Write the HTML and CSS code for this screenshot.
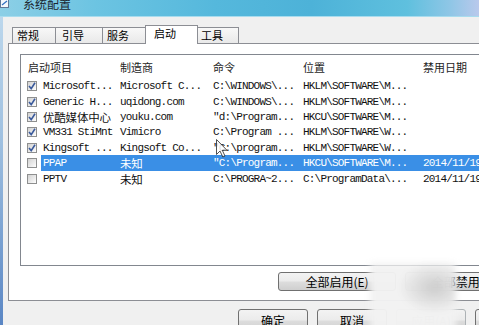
FILE: index.html
```html
<!DOCTYPE html>
<html lang="zh-CN">
<head>
<meta charset="utf-8">
<title>系统配置</title>
<link rel="stylesheet" href="styles.css">
</head>
<body>
<div class="window">
  <div class="titlebar">
    <svg class="appicon" width="9" height="8" viewBox="0 0 9 8"><rect x="0.5" y="-1.5" width="8" height="9" fill="#f4f8fc" stroke="#5f7896"/><path d="M2 5 L7 1" stroke="#2f6fc0" stroke-width="1.2"/></svg>
    <span class="title">系统配置</span>
  </div>
  <div class="main">
    <div class="frame"></div>
    <div class="dialog">
      <div class="tabs">
        <div class="tab t1">常规</div>
        <div class="tab t2">引导</div>
        <div class="tab t3">服务</div>
        <div class="tab sel">启动</div>
        <div class="tab t5">工具</div>
      </div>
      <div class="panel">
        <div class="list">
          <div class="hdr">
            <div class="h0">启动项目</div>
            <div class="h2">制造商</div>
            <div class="h3">命令</div>
            <div class="h4">位置</div>
            <div class="h5">禁用日期</div>
          </div>
          <div class="row">
            <div class="c0"><span class="cb"><svg viewBox="0 0 10 10" width="10" height="10"><path d="M2 5 L4.2 7.6 L8 1.8" fill="none" stroke="#3a5a9c" stroke-width="1.6"/></svg></span></div>
            <div class="data"><div class="c1">Microsoft...</div><div class="c2">Microsoft C...</div><div class="c3">C:\WINDOWS\...</div><div class="c4">HKLM\SOFTWARE\M...</div><div class="c5"></div></div>
          </div>
          <div class="row">
            <div class="c0"><span class="cb"><svg viewBox="0 0 10 10" width="10" height="10"><path d="M2 5 L4.2 7.6 L8 1.8" fill="none" stroke="#3a5a9c" stroke-width="1.6"/></svg></span></div>
            <div class="data"><div class="c1">Generic H...</div><div class="c2">uqidong.com</div><div class="c3">C:\WINDOWS\...</div><div class="c4">HKLM\SOFTWARE\M...</div><div class="c5"></div></div>
          </div>
          <div class="row">
            <div class="c0"><span class="cb"><svg viewBox="0 0 10 10" width="10" height="10"><path d="M2 5 L4.2 7.6 L8 1.8" fill="none" stroke="#3a5a9c" stroke-width="1.6"/></svg></span></div>
            <div class="data"><div class="c1 zh">优酷媒体中心</div><div class="c2">youku.com</div><div class="c3">"d:\Program...</div><div class="c4">HKCU\SOFTWARE\M...</div><div class="c5"></div></div>
          </div>
          <div class="row">
            <div class="c0"><span class="cb"><svg viewBox="0 0 10 10" width="10" height="10"><path d="M2 5 L4.2 7.6 L8 1.8" fill="none" stroke="#3a5a9c" stroke-width="1.6"/></svg></span></div>
            <div class="data"><div class="c1">VM331 StiMnt</div><div class="c2">Vimicro</div><div class="c3">C:\Program ...</div><div class="c4">HKLM\SOFTWARE\W...</div><div class="c5"></div></div>
          </div>
          <div class="row">
            <div class="c0"><span class="cb"><svg viewBox="0 0 10 10" width="10" height="10"><path d="M2 5 L4.2 7.6 L8 1.8" fill="none" stroke="#3a5a9c" stroke-width="1.6"/></svg></span></div>
            <div class="data"><div class="c1">Kingsoft ...</div><div class="c2">Kingsoft Co...</div><div class="c3">"C:\program...</div><div class="c4">HKLM\SOFTWARE\W...</div><div class="c5"></div></div>
          </div>
          <div class="row selected">
            <div class="c0"><span class="cb"></span></div>
            <div class="data"><div class="c1">PPAP</div><div class="c2 zh">未知</div><div class="c3">"C:\Program...</div><div class="c4">HKCU\SOFTWARE\M...</div><div class="c5">2014/11/19</div></div>
          </div>
          <div class="row">
            <div class="c0"><span class="cb"></span></div>
            <div class="data"><div class="c1">PPTV</div><div class="c2 zh">未知</div><div class="c3">C:\PROGRA~2...</div><div class="c4">C:\ProgramData\...</div><div class="c5">2014/11/19</div></div>
          </div>
        </div>
        <div class="panel-btns">
          <div class="btn wide">全部启用(E)</div>
          <div class="btn wide">全部禁用(D)</div>
        </div>
      </div>
      <div class="dlg-btns">
        <div class="btn std">确定</div>
        <div class="btn std">取消</div>
        <div class="btn std disabled">应用(A)</div>
        <div class="btn std">帮助</div>
      </div>
    </div>
  </div>
</div>
<svg class="cursor" width="13" height="19" viewBox="0 0 13 19"><path d="M0.5 0.5 L0.5 15.5 L4 12 L6.8 18 L9 17 L6.3 11.3 L11 11.3 Z" fill="#fff" stroke="#333" stroke-width="1" stroke-linejoin="round"/></svg>
<div class="blur"></div>
</body>
</html>
```

FILE: styles.css
```css
html, body {
  margin: 0;
  padding: 0;
}
body {
  width: 479px;
  height: 325px;
  overflow: hidden;
  position: relative;
  background: #f0f0f0;
  font-family: "Noto Sans CJK SC", sans-serif;
  color: #000;
}
.window {
  display: flex;
  flex-direction: column;
  height: 325px;
}
.titlebar {
  height: 16px;
  border-bottom: 1px solid #a8dcee;
  background: linear-gradient(90deg, #8ccfe6 0%, #6cc4e2 20%, #55b8dc 45%, #4db2d8 65%, #5fc0de 85%, #8fc6e6 94%, #b9c9ec 100%);
  display: flex;
  align-items: flex-start;
  flex-shrink: 0;
}
.appicon {
  display: block;
  flex-shrink: 0;
}
.title {
  font-size: 12px;
  line-height: 12px;
  margin-top: -2px;
  margin-left: 14px;
  color: #1c2630;
}
.main {
  display: flex;
  flex: 1;
  min-height: 0;
}
.frame {
  width: 3px;
  flex-shrink: 0;
  background: linear-gradient(#bcd7ec 0%, #9fc0e0 40%, #5a86c4 100%);
}
.dialog {
  flex: 1;
  min-width: 0;
  padding: 8px 0 0 5px;
  overflow: hidden;
  background: #f0f0f0;
}
.tabs {
  display: flex;
  align-items: flex-end;
  height: 18px;
  padding-left: 4px;
}
.tab {
  height: 16px;
  box-sizing: border-box;
  border: 1px solid #8c8e94;
  border-bottom: none;
  background: linear-gradient(#f8f8f8, #e9e9e9);
  font-size: 11px;
  line-height: 14px;
  padding-left: 4px;
  white-space: nowrap;
  flex-shrink: 0;
}
.t1 { width: 44px; }
.t2 { width: 48px; margin-left: -1px; padding-left: 6px; }
.t3 { width: 46px; margin-left: -1px; }
.t5 { width: 44px; margin-left: -3px; padding-left: 5px; }
.tab.sel {
  width: 53px;
  height: 19px;
  margin-left: -3px;
  margin-bottom: -1px;
  background: #fff;
  position: relative;
  z-index: 1;
  padding-left: 8px;
  line-height: 15px;
}
.panel {
  width: 600px;
  height: 258px;
  box-sizing: border-box;
  border: 1px solid #8c8e94;
  background: #fff;
  padding: 10px 0 0 11px;
}
.list {
  width: 600px;
  height: 212px;
  box-sizing: border-box;
  border: 1px solid #82878f;
  background: #fff;
}
.hdr {
  height: 23.5px;
  display: flex;
  align-items: center;
  font-size: 11px;
  color: #1e1e1e;
}
.hdr > div { box-sizing: border-box; white-space: nowrap; }
.h0 { width: 97px; padding-left: 7px; }
.h2 { width: 93px; padding-left: 2px; }
.h3 { width: 90px; padding-left: 2px; }
.h4 { width: 120px; padding-left: 2px; }
.h5 { padding-left: 2px; }
.row {
  height: 15.4px;
  display: flex;
  align-items: stretch;
  font-family: "Liberation Mono", "Noto Sans CJK SC", monospace;
  font-size: 11px;
  letter-spacing: -0.8px;
  color: #111;
}
.c0 {
  width: 20px;
  box-sizing: border-box;
  padding-left: 6px;
  display: flex;
  align-items: center;
  flex-shrink: 0;
}
.cb {
  width: 10px;
  height: 10px;
  box-sizing: border-box;
  border: 1px solid #8e8f8f;
  background: linear-gradient(135deg, #d2d2d2, #f0f0f0 70%, #fff);
  display: block;
  position: relative;
}
.cb svg {
  display: block;
  margin: -1px 0 0 -1px;
}
.data {
  display: flex;
  align-items: center;
  flex: 1;
}
.data > div {
  box-sizing: border-box;
  padding-left: 2px;
  white-space: nowrap;
  overflow: hidden;
  flex-shrink: 0;
}
.c1 { width: 77px; }
.c2 { width: 93px; }
.c3 { width: 90px; }
.c4 { width: 120px; }
.c5 { width: 90px; }
.zh {
  font-family: "Noto Sans CJK SC", sans-serif;
  font-size: 11.5px;
  letter-spacing: -0.2px;
}
.row.selected .data {
  background: #3a8fe6;
  color: #fff;
}
.panel-btns {
  display: flex;
  gap: 9px;
  margin-top: 6px;
  padding-left: 258px;
}
.btn {
  box-sizing: border-box;
  border: 1px solid #707070;
  border-radius: 3px;
  background: linear-gradient(#f3f3f3 0%, #ebebeb 48%, #dddddd 52%, #cfcfcf 100%);
  font-size: 12px;
  display: flex;
  align-items: center;
  justify-content: center;
  white-space: nowrap;
  flex-shrink: 0;
}
.wide {
  width: 118px;
  height: 19px;
}
.dlg-btns {
  display: flex;
  gap: 9px;
  margin-top: 8px;
  padding-left: 230px;
}
.std {
  width: 70px;
  height: 23px;
  align-items: flex-start;
  padding-top: 2px;
}
.disabled {
  color: #a0a0a0;
  border-color: #adb2b5;
}
.cursor {
  position: absolute;
  left: 216px;
  top: 139px;
  opacity: 0.85;
}
.blur {
  position: absolute;
  left: 370px;
  top: 263px;
  width: 86px;
  height: 70px;
  background: radial-gradient(ellipse at 75% 35%, rgba(200, 200, 200, 0.9), rgba(240, 240, 240, 0) 40%), rgba(242, 242, 242, 0.97);
  filter: blur(3px);
}
```
